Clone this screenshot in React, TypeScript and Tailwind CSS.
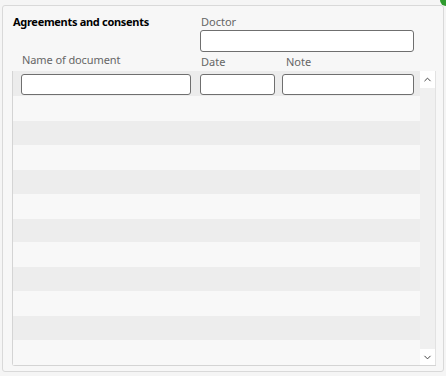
import { ChevronUp, ChevronDown } from "lucide-react";

const font = { fontFamily: '"Noto Sans", "Open Sans", sans-serif' };

export default function App() {
  // light rows are 25px, gray rows 24px
  const rows = [0, 1, 2, 3, 4, 5, 6, 7, 8, 9, 10];
  return (
    <div className="relative w-[446px] h-[376px] bg-[#f5f5f5] pt-[5px] pl-[2px] overflow-hidden" style={font}>
      {/* status dot */}
      <div className="absolute -top-[6px] -right-[6px] w-[12px] h-[12px] rounded-full bg-[#2e9b2e]" />
      <div className="w-[442px] h-[367px] rounded-[3px] border border-[#d9d9d9] bg-[#f7f7f7] pl-[9px]">
        <div className="flex pt-[9px]">
          <div className="w-[188px] text-[11px] font-bold tracking-[-0.3px] text-black leading-[14px] pl-[1px]">Agreements and consents</div>
          <div className="flex flex-col">
            <div className="text-[11px] text-[#666] leading-[14px] pl-[1px]">Doctor</div>
            <div className="mt-[1px] w-[214px] h-[22px] rounded-[3px] border border-[#6f6f6f] bg-white" />
          </div>
        </div>
        <div className="flex text-[11px] text-[#666] leading-[14px] h-[19px]">
          <div className="w-[189px] pl-[10px] pt-[1px] tracking-[-0.1px]">Name of document</div>
          <div className="w-[85px] pt-[3px]">Date</div>
          <div className="pt-[3px]">Note</div>
        </div>
        <div className="flex w-[424px] h-[295px] border-l border-b border-[#d4d4d4] rounded-bl-[3px] bg-[#f8f8f8]">
          <div className="flex flex-col w-[407px]">
            <div className="flex items-center h-[25px] bg-[#ececec] pl-[8px] gap-[9px]">
              <div className="w-[170px] h-[21px] mt-[2px] rounded-[3px] border border-[#6f6f6f] bg-white" />
              <div className="w-[75px] h-[21px] mt-[2px] rounded-[3px] border border-[#6f6f6f] bg-white" />
              <div className="w-[132px] h-[21px] mt-[2px] -ml-[2px] rounded-[3px] border border-[#6f6f6f] bg-white" />
            </div>
            {rows.map((i) =>
              i % 2 === 0 ? (
                <div key={i} className="h-[25px] bg-[#f8f8f8]" />
              ) : (
                <div key={i} className="h-[24px] bg-[#ededed]" />
              )
            )}
          </div>
          <div className="flex flex-col w-[16px] bg-[#f0f0f0] border-r border-[#e2e2e2]">
            <div className="h-[17px] bg-white flex items-center justify-center text-[#333]">
              <ChevronUp size={11} strokeWidth={2} />
            </div>
            <div className="flex-1" />
            <div className="h-[16px] bg-white flex items-center justify-center text-[#333]">
              <ChevronDown size={11} strokeWidth={2} />
            </div>
          </div>
        </div>
      </div>
    </div>
  );
}
